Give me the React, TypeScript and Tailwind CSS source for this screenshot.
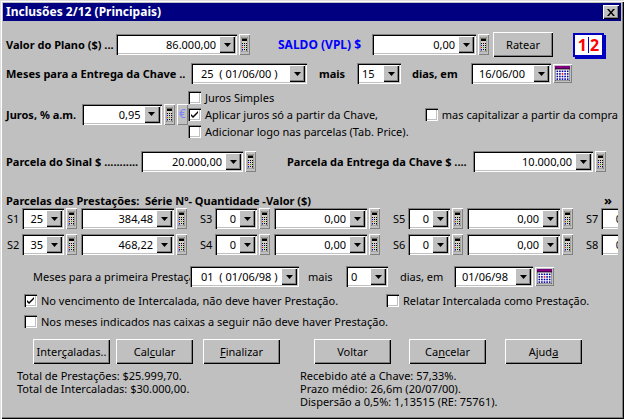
import React from "react";

const raised = "bg-[#c0c0c0] shadow-[inset_1px_1px_0_#fff,inset_-1px_-1px_0_#000,inset_-2px_-2px_0_#808080]";
const sunken = "bg-white shadow-[inset_1px_1px_0_#808080,inset_2px_2px_0_#000,inset_-1px_-1px_0_#fff,inset_-2px_-2px_0_#c0c0c0]";

function Arrow() {
  return (
    <div className={`${raised} w-[16px] h-[17px] flex items-center justify-center shrink-0`}>
      <svg width="7" height="4" viewBox="0 0 7 4"><path d="M0 0h7L3.5 4z" fill="#000" /></svg>
    </div>
  );
}

function Combo({ w, v, left, pl = 4 }: { w: number; v: string; left?: boolean; pl?: number }) {
  return (
    <div className={`${sunken} h-[21px] flex items-center p-[2px] shrink-0`} style={{ width: w }}>
      <div className={`flex-1 h-full flex items-center overflow-hidden whitespace-pre ${left ? "justify-start" : "justify-end pr-[3px]"}`} style={{ paddingLeft: pl }}>{v}</div>
      <Arrow />
    </div>
  );
}

function Calc() {
  return (
    <div className="w-[11px] h-[21px] shrink-0 bg-[#c0c0c0] shadow-[inset_1px_1px_0_#fff,inset_-1px_-1px_0_#808080] flex items-center justify-center ml-[2px]">
      <svg width="7" height="15" viewBox="0 0 7 15">
        <rect x="0" y="0" width="7" height="15" fill="#d4d0c8" stroke="#404040" strokeWidth="0.6" />
        <rect x="1" y="1.5" width="5" height="2.5" fill="#000" />
        <rect x="1" y="6" width="1" height="1" fill="#000" /><rect x="3" y="6" width="1" height="1" fill="#000" /><rect x="5" y="6" width="1" height="1" fill="#000" />
        <rect x="1" y="8" width="1" height="1" fill="#00f" /><rect x="3" y="8" width="1" height="1" fill="#000" /><rect x="5" y="8" width="1" height="1" fill="#000" />
        <rect x="1" y="10" width="1" height="1" fill="#f00" /><rect x="3" y="10" width="1" height="1" fill="#0a0" /><rect x="5" y="10" width="1" height="1" fill="#000" />
        <rect x="1" y="12" width="1" height="1.5" fill="#00f" /><rect x="3" y="12" width="1" height="1" fill="#000" /><rect x="5" y="12" width="1" height="1.5" fill="#000" />
      </svg>
    </div>
  );
}

function Cal() {
  return (
    <div className="w-[19px] h-[19px] shrink-0 bg-[#c0c0c0] shadow-[inset_1px_1px_0_#fff,inset_-1px_-1px_0_#808080] flex items-center justify-center ml-[2px]">
      <svg width="15" height="15" viewBox="0 0 15 15">
        <rect x="0" y="0" width="15" height="3" fill="#800080" />
        <rect x="0" y="3" width="15" height="12" fill="#fff" stroke="#000" strokeWidth="0.8" />
        {[0, 1, 2, 3].map(r => [0, 1, 2, 3, 4].map(c => (
          <rect key={r + "-" + c} x={1.5 + c * 2.6} y={4.5 + r * 2.6} width="1.6" height="1.6" fill={r === 1 && c === 2 ? "#f00" : "#0000a0"} />
        )))}
      </svg>
    </div>
  );
}

function Check({ on, label }: { on?: boolean; label: string }) {
  return (
    <div className="flex items-center gap-[4px] h-[16px]">
      <div className={`${sunken} w-[13px] h-[13px] flex items-center justify-center shrink-0`}>
        {on && <svg width="9" height="9" viewBox="0 0 9 9"><path d="M1 4l2 2 5-5v2l-5 5-2-2z" fill="#000" /></svg>}
      </div>
      <span>{label}</span>
    </div>
  );
}

function Btn({ children, w = 77 }: { children: React.ReactNode; w?: number }) {
  return <div className={`${raised} h-[25px] flex items-center justify-center shrink-0`} style={{ width: w }}>{children}</div>;
}

function SGroup({ n1, q, v, last }: { n1: string; q: string; v: string; last?: boolean }) {
  return (
    <div className="flex items-center shrink-0">
      <span className="w-[16px] pl-[1px]">{n1}</span>
      <Combo w={42} v={q} />
      {!last && <Calc />}
      {!last && <div className="w-[4px]" />}
      {!last && <Combo w={93} v={v} />}
      {!last && <Calc />}
      <div className="w-[12px]" />
    </div>
  );
}

export default function App() {
  return (
    <div className="w-[624px] h-[419px] bg-[#c0c0c0] relative overflow-hidden whitespace-nowrap text-[11px] text-black font-['DejaVu_Sans_Condensed','Liberation_Sans',sans-serif] shadow-[inset_1px_1px_0_#dfdfdf,inset_2px_2px_0_#fff,inset_-1px_-1px_0_#000,inset_-2px_-2px_0_#808080] p-[3px] leading-none">
      <div className="h-[18px] bg-[#000080] flex items-center justify-between pl-[3px] pr-[2px]">
        <span className="text-white font-bold text-[12px]">Inclusões 2/12 (Principais)</span>
        <div className={`${raised} w-[16px] h-[14px] flex items-center justify-center`}>
          <svg width="8" height="7" viewBox="0 0 8 7"><path d="M0 0h2l2 2.5L6 0h2L5 3.5 8 7H6L4 4.5 2 7H0l3-3.5z" fill="#000" /></svg>
        </div>
      </div>

      <div className="px-[3px]">
        <div className="flex items-center mt-[11px] h-[25px]">
          <span className="font-bold w-[110px]">Valor do Plano ($) ...</span>
          <Combo w={121} v="86.000,00" />
          <Calc />
          <span className="font-bold text-[#0000ff] text-[12px] ml-[28px] w-[94px]">SALDO (VPL) $</span>
          <Combo w={104} v="0,00" />
          <Calc />
          <div className="ml-[4px]"><Btn w={60}>Ratear</Btn></div>
          <div className="ml-[20px] w-[31px] h-[24px] bg-white border-2 border-[#0000c0] flex items-center justify-center font-bold text-[#f00] text-[16px] shadow-[2px_2px_0_#0000c0]">1<span className="border-l border-[#0000c0] mx-[1px] h-[16px]" />2</div>
        </div>

        <div className="flex items-center mt-[6px] h-[21px]">
          <span className="font-bold w-[185px]">Meses para a Entrega da Chave ..</span>
          <Combo w={116} v="25  ( 01/06/00 )" left pl={8} />
          <span className="font-bold ml-[12px] w-[38px]">mais</span>
          <Combo w={44} v="15" left pl={3} />
          <span className="font-bold ml-[11px] w-[59px]">dias,  em</span>
          <Combo w={80} v="16/06/00" left pl={6} />
          <Cal />
        </div>

        <div className="flex mt-[5px]">
          <div className="flex items-center w-[182px]">
            <span className="font-bold w-[80px]">Juros, % a.m.</span>
            <Combo w={80} v="0,95" />
            <Calc />
            <div className="w-[12px] h-[21px] ml-[2px] shadow-[inset_1px_1px_0_#fff,inset_-1px_-1px_0_#808080] flex items-center justify-center text-[#8080ff] text-[12px]">€</div>
          </div>
          <div className="flex flex-col gap-[1px] w-[250px]">
            <Check label="Juros Simples" />
            <Check on label="Aplicar juros só a partir da Chave," />
            <Check label="Adicionar logo nas parcelas (Tab. Price)." />
          </div>
          <div className="mt-[17px]"><Check label="mas capitalizar a partir da compra" /></div>
        </div>

        <div className="flex items-center mt-[12px] h-[21px]">
          <span className="font-bold w-[135px]">Parcela do Sinal $ ...........</span>
          <Combo w={102} v="20.000,00" />
          <Calc />
          <span className="font-bold ml-[31px] w-[186px]">Parcela da Entrega da Chave $ ....</span>
          <Combo w={120} v="10.000,00" />
          <Calc />
        </div>

        <div className="flex items-center justify-between mt-[22px] h-[12px]">
          <span className="font-bold">Parcelas das Prestações:&nbsp;&nbsp;Série Nº- Quantidade -Valor ($)</span>
          <span className="font-bold mr-[6px] text-[13px]">»</span>
        </div>

        <div className="flex mt-[2px] h-[21px] overflow-hidden">
          <SGroup n1="S1" q="25" v="384,48" />
          <SGroup n1="S3" q="0" v="0,00" />
          <SGroup n1="S5" q="0" v="0,00" />
          <SGroup n1="S7" q="0" v="" last />
        </div>
        <div className="flex mt-[5px] h-[21px] overflow-hidden">
          <SGroup n1="S2" q="35" v="468,22" />
          <SGroup n1="S4" q="0" v="0,00" />
          <SGroup n1="S6" q="0" v="0,00" />
          <SGroup n1="S8" q="0" v="" last />
        </div>

        <div className="flex items-center mt-[11px] h-[21px] pl-[27px]">
          <span className="w-[157px]">Meses para a primeira Prestação</span>
          <Combo w={109} v="01  ( 01/06/98 )" left pl={9} />
          <span className="ml-[9px] w-[38px]">mais</span>
          <Combo w={42} v="0" left pl={3} />
          <span className="ml-[12px] w-[54px]">dias,  em</span>
          <Combo w={79} v="01/06/98" left pl={6} />
          <Cal />
        </div>

        <div className="flex mt-[5px] pl-[18px]">
          <div className="w-[362px]"><Check on label="No vencimento de Intercalada, não deve haver Prestação." /></div>
          <Check label="Relatar Intercalada como Prestação." />
        </div>
        <div className="mt-[5px] pl-[18px]"><Check label="Nos meses indicados nas caixas a seguir não deve haver Prestação." /></div>

        <div className="flex mt-[10px] pl-[27px]">
          <Btn>Inter<u>ç</u>aladas..</Btn>
          <div className="w-[6px]" />
          <Btn>Cal<u>c</u>ular</Btn>
          <div className="w-[10px]" />
          <Btn><u>F</u>inalizar</Btn>
          <div className="w-[34px]" />
          <Btn>Voltar</Btn>
          <div className="w-[18px]" />
          <Btn>Ca<u>n</u>celar</Btn>
          <div className="w-[19px]" />
          <Btn>Ajud<u>a</u></Btn>
        </div>

        <div className="flex mt-[5px] pl-[11px] leading-[13px]">
          <div className="w-[283px]">
            <div>Total de Prestações: $25.999,70.</div>
            <div>Total de Intercaladas: $30.000,00.</div>
          </div>
          <div>
            <div>Recebido até a Chave: 57,33%.</div>
            <div>Prazo médio: 26,6m (20/07/00).</div>
            <div>Dispersão a 0,5%: 1,13515 (RE: 75761).</div>
          </div>
        </div>
      </div>
    </div>
  );
}
